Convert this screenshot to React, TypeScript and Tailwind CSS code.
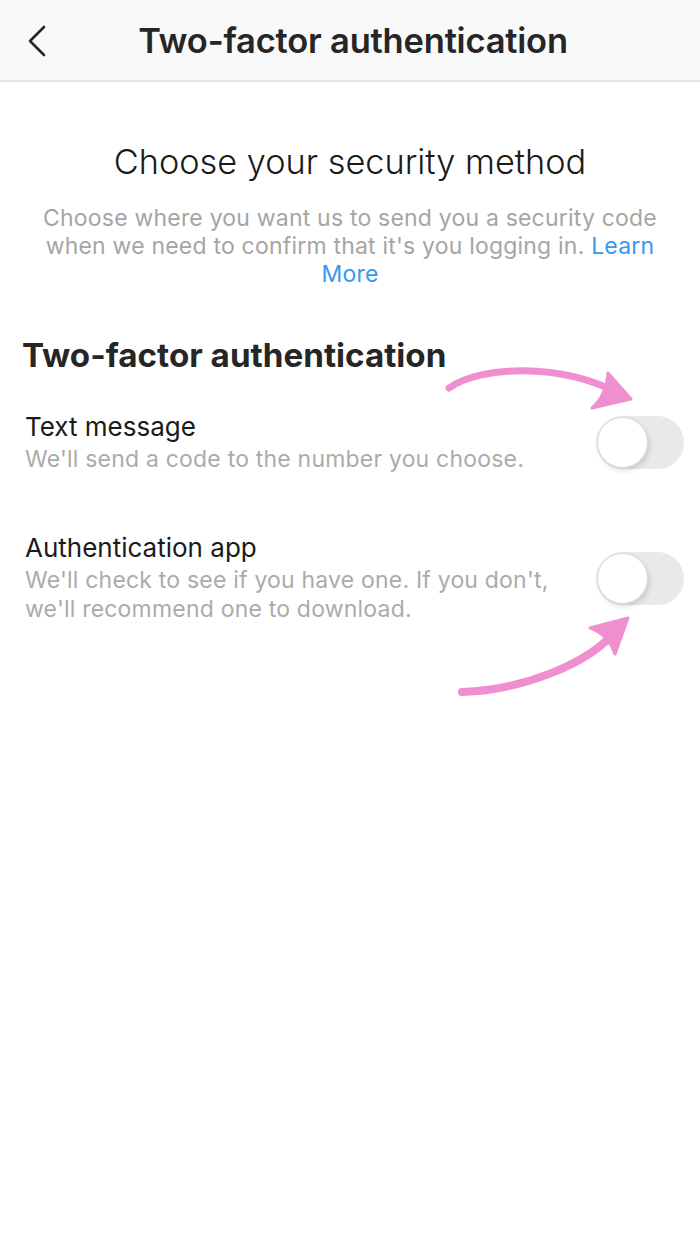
import React from "react";

function Toggle() {
  return (
    <div className="relative w-[88px] h-[53px] rounded-full bg-[#e9e9e9] shrink-0">
      <div className="absolute left-[1px] top-[1px] w-[51px] h-[51px] rounded-full bg-white border border-[#dcdcdc] shadow-[2px_3px_5px_rgba(0,0,0,0.12)]" />
    </div>
  );
}

export default function App() {
  return (
    <div
      className="relative w-[700px] h-[1245px] bg-white text-[#262626]"
      style={{ fontFamily: "Inter, Roboto, 'Liberation Sans', sans-serif" }}
    >
      <div className="relative h-[82px] bg-[#f9f9f9] border-b-2 border-[#e3e3e3] flex items-center justify-center">
        <svg className="absolute left-[26px] top-[25px]" width="22" height="32" viewBox="0 0 22 32">
          <path d="M18 2 L4 16 L18 30" fill="none" stroke="#262626" strokeWidth="2.6" strokeLinecap="round" strokeLinejoin="round" />
        </svg>
        <div className="text-[34.5px] font-semibold tracking-[-0.2px] ml-[6px] mt-[2px] text-[#262626]">Two-factor authentication</div>
      </div>

      <div className="pt-[58px] flex flex-col items-center">
        <div className="text-[34.3px] font-light leading-[44px] text-[#1a1a1a]">Choose your security method</div>
        <div className="mt-[20px] flex flex-col items-center text-[23px] tracking-[0.2px] leading-[28px] text-[#a5a5a5]">
          <div>Choose where you want us to send you a security code</div>
          <div>
            <span>when we need to confirm that it's you logging in.</span>{" "}
            <span className="text-[#3897f0]">Learn</span>
          </div>
          <div className="text-[#3897f0]">More</div>
        </div>
      </div>

      <div className="px-[22px] mt-[47px]">
        <div className="text-[33.2px] font-bold leading-[40px] text-[#262626]">Two-factor authentication</div>
      </div>

      <div className="mt-[36px] pl-[25px] pr-[16px] flex items-center justify-between">
        <div>
          <div className="text-[26px] leading-[32px] text-[#1a1a1a]">Text message</div>
          <div className="mt-[2px] text-[23px] tracking-[0.2px] leading-[29px] text-[#ababab]">We'll send a code to the number you choose.</div>
        </div>
        <Toggle />
      </div>

      <div className="mt-[58px] pl-[25px] pr-[16px] flex items-center justify-between">
        <div>
          <div className="text-[26px] leading-[32px] text-[#1a1a1a]">Authentication app</div>
          <div className="mt-[2px] text-[23px] tracking-[0.2px] leading-[29px] text-[#ababab]">
            <div>We'll check to see if you have one. If you don't,</div>
            <div>we'll recommend one to download.</div>
          </div>
        </div>
        <Toggle />
      </div>

      <svg className="absolute left-0 top-0 pointer-events-none" width="700" height="1245" viewBox="0 0 700 1245">
        <path d="M449 388 C 480 366, 560 362, 620 394" fill="none" stroke="#f08fcf" strokeWidth="7" strokeLinecap="round" />
        <path d="M608 373 L631 399 L592 408 Q 606 396 608 373 Z" fill="#f08fcf" stroke="#f08fcf" strokeWidth="3" strokeLinejoin="round" />
        <path d="M462 692 C 520 690, 590 665, 618 628" fill="none" stroke="#f08fcf" strokeWidth="8" strokeLinecap="round" />
        <path d="M590 628 L628 618 L615 654 Q 608 634 590 628 Z" fill="#f08fcf" stroke="#f08fcf" strokeWidth="3" strokeLinejoin="round" />
      </svg>
    </div>
  );
}
